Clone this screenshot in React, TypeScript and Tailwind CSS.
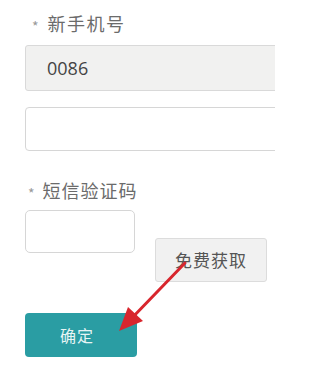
export default function App() {
  return (
    <div
      className="w-[275px] h-[366px] bg-white overflow-hidden relative"
      style={{ fontFamily: '"Noto Sans CJK SC", "Noto Sans", sans-serif' }}
    >
      <div className="pl-[25px] pt-[10px] flex flex-col">
        <div className="flex items-center h-[26px] text-[#6b6b6b]">
          <span className="text-[14px] leading-none ml-[7px] mr-[9px] text-[#999] translate-y-[3px]">*</span>
          <span className="text-[18px] leading-none tracking-[1.5px]">新手机号</span>
        </div>
        <div className="mt-[9px] h-[46px] w-[270px] bg-[#f1f1f0] border border-[#d9d9d9] rounded-[3px] flex items-center pl-[21px] text-[18px] text-[#444]" style={{ fontFamily: '"Open Sans", sans-serif' }}>
          0086
        </div>
        <div className="mt-[16px] h-[44px] w-[270px] bg-white border border-[#d6d6d6] rounded-[4px]" />
        <div className="mt-[26px] flex items-center h-[26px] text-[#6b6b6b]">
          <span className="text-[14px] leading-none ml-[3px] mr-[8px] text-[#999] translate-y-[3px]">*</span>
          <span className="text-[18px] leading-none tracking-[1px]">短信验证码</span>
        </div>
        <div className="flex items-start mt-[7px]">
          <div className="h-[43px] w-[110px] bg-white border border-[#d6d6d6] rounded-[5px]" />
          <div className="ml-[20px] mt-[28px] h-[44px] w-[112px] bg-[#f1f1f1] border border-[#dcdcdc] rounded-[3px] flex items-center justify-center text-[17px] text-[#555] tracking-[1px]">
            免费获取
          </div>
        </div>
        <div className="mt-[31px] h-[44px] w-[112px] bg-[#2a9da3] rounded-[4px] flex items-center justify-center pr-[8px] text-[16px] text-[#e6f4f4] tracking-[1px]">
          确定
        </div>
      </div>
      <svg className="absolute left-0 top-0" width="275" height="366" viewBox="0 0 275 366">
        <line x1="185" y1="263" x2="130" y2="320" stroke="#d8262d" strokeWidth="3" strokeLinecap="round" />
        <polygon points="119,331 128,307 143,321" fill="#d8262d" />
      </svg>
    </div>
  );
}
